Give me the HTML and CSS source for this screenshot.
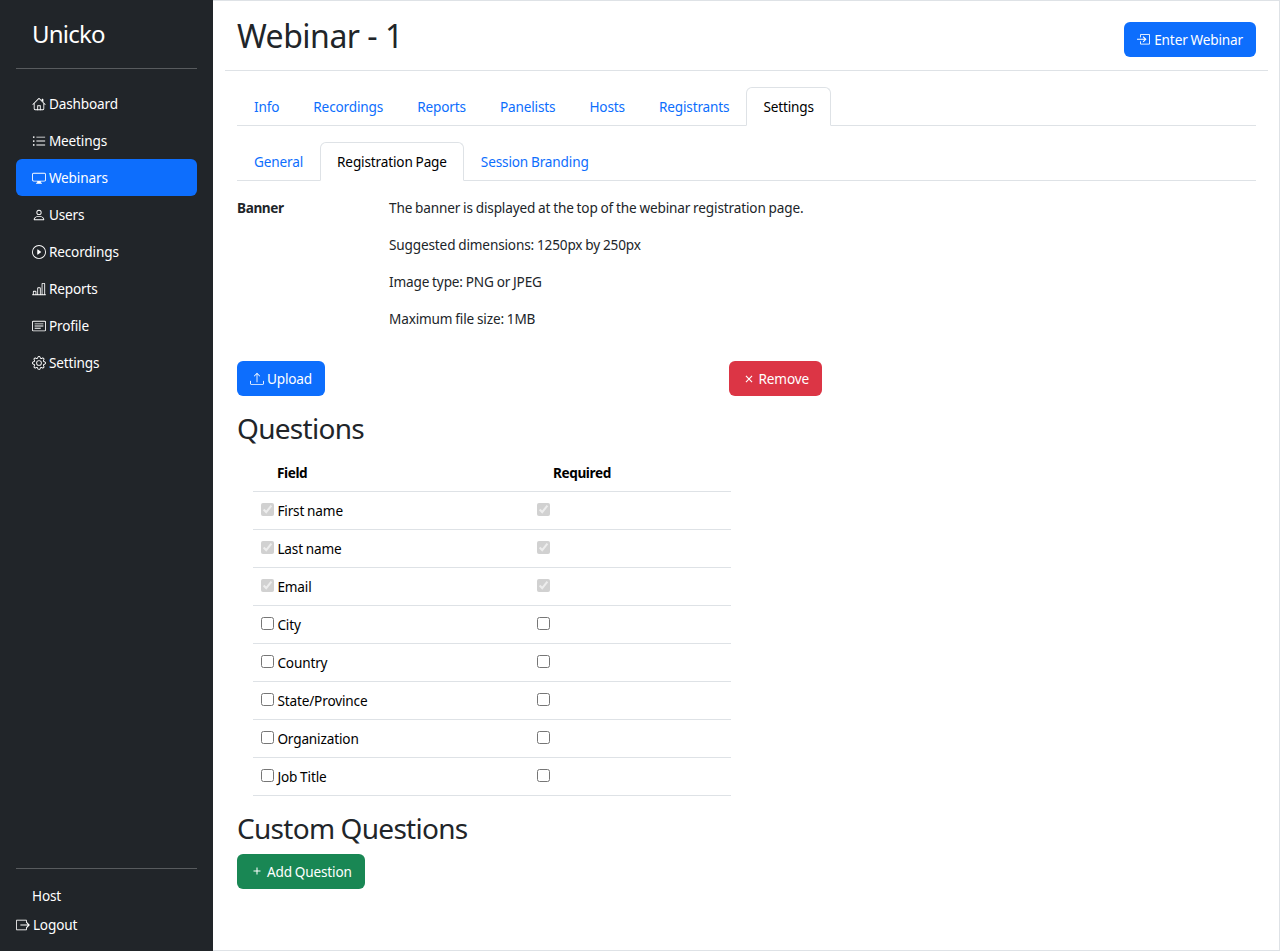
FILE: index.html
```
<!DOCTYPE html>
<html lang="en">
<head>
    <meta charset="UTF-8">
    <meta name="viewport" content="width=device-width, initial-scale=1.0">
    <title>Unicko - Webinar - 1</title>
    <link rel="stylesheet" href="styles.css">
</head>
<body>
    <aside class="sidebar">
        <a class="brand" href="#">Unicko</a>
        <hr>
        <ul class="menu">
            <li><a href="#"><svg class="icon" viewBox="0 0 16 16"><path fill-rule="evenodd" d="M2 13.5V7h1v6.5a.5.5 0 0 0 .5.5h9a.5.5 0 0 0 .5-.5V7h1v6.5a1.5 1.5 0 0 1-1.5 1.5h-9A1.5 1.5 0 0 1 2 13.5zm11-11V6l-2-2V2.500a.5.5 0 0 1 .5-.5h1a.5.5 0 0 1 .5.5z"/><path d="M7.293 1.500a1 1 0 0 1 1.414 0l6.647 6.646a.5.5 0 0 1-.708.708L8 2.207 1.354 8.854a.5.5 0 1 1-.708-.708L7.293 1.500z"/><path d="M6 15V9.500h4V15H9v-4.500H7V15z"/></svg> Dashboard</a></li>
            <li><a href="#"><svg class="icon" viewBox="0 0 16 16"><path d="M5 3h10v1H5zM5 7.500h10v1H5zM5 12h10v1H5z"/><circle cx="2" cy="3.500" r="1"/><circle cx="2" cy="8" r="1"/><circle cx="2" cy="12.500" r="1"/></svg> Meetings</a></li>
            <li><a class="active" href="#"><svg class="icon" viewBox="0 0 16 16"><path d="M0 4s0-2 2-2h12s2 0 2 2v6s0 2-2 2h-4c0 .667.083 1.167.25 1.500H11a.5.5 0 0 1 0 1H5a.5.5 0 0 1 0-1h.75c.167-.333.25-.833.25-1.500H2s-2 0-2-2V4zm1.398-.855a.758.758 0 0 0-.254.302A1.460 1.460 0 0 0 1 4.010V10c0 .325.078.502.145.602.070.105.170.188.302.254a1.464 1.464 0 0 0 .538.143L2.010 11H14c.325 0 .502-.078.602-.145a.758.758 0 0 0 .254-.302 1.464 1.464 0 0 0 .143-.538L15 9.990V4c0-.325-.078-.502-.145-.602a.757.757 0 0 0-.302-.254A1.460 1.460 0 0 0 13.990 3H2c-.325 0-.502.078-.602.145z"/></svg> Webinars</a></li>
            <li><a href="#"><svg class="icon" viewBox="0 0 16 16"><path d="M8 8a3 3 0 1 0 0-6 3 3 0 0 0 0 6zm2-3a2 2 0 1 1-4 0 2 2 0 0 1 4 0zm4 8c0 1-1 1-1 1H3s-1 0-1-1 1-4 6-4 6 3 6 4zm-1-.004c-.001-.246-.154-.986-.832-1.664C11.516 10.680 10.289 10 8 10c-2.290 0-3.516.680-4.168 1.332-.678.678-.830 1.418-.832 1.664h10z"/></svg> Users</a></li>
            <li><a href="#"><svg class="icon" viewBox="0 0 16 16"><path d="M8 15A7 7 0 1 1 8 1a7 7 0 0 1 0 14zm0 1A8 8 0 1 0 8 0a8 8 0 0 0 0 16z"/><path d="M6.271 5.055a.5.5 0 0 1 .52.038l3.500 2.500a.5.5 0 0 1 0 .814l-3.500 2.500A.5.5 0 0 1 6 10.500v-5a.5.5 0 0 1 .271-.445z"/></svg> Recordings</a></li>
            <li><a href="#"><svg class="icon" viewBox="0 0 16 16"><path d="M11 2a1 1 0 0 1 1-1h2a1 1 0 0 1 1 1v12h.5a.5.5 0 0 1 0 1H.5a.5.5 0 0 1 0-1H1v-3a1 1 0 0 1 1-1h2a1 1 0 0 1 1 1v3h1V7a1 1 0 0 1 1-1h2a1 1 0 0 1 1 1v7h1V2zm1 12h2V2h-2v12zm-3 0V7H7v7h2zm-5 0v-3H2v3h2z"/></svg> Reports</a></li>
            <li><a href="#"><svg class="icon" viewBox="0 0 16 16"><path d="M14.500 3a.5.5 0 0 1 .5.5v9a.5.5 0 0 1-.5.5h-13a.5.5 0 0 1-.5-.5v-9a.5.5 0 0 1 .5-.5h13zm-13-1A1.500 1.500 0 0 0 0 3.500v9A1.500 1.500 0 0 0 1.500 14h13a1.500 1.500 0 0 0 1.500-1.500v-9A1.500 1.500 0 0 0 14.500 2h-13z"/><path d="M3 5h10v1H3zM3 7.500h10v1H3zM3 10h7v1H3z"/></svg> Profile</a></li>
            <li><a href="#"><svg class="icon" viewBox="0 0 16 16"><path d="M8 4.754a3.246 3.246 0 1 0 0 6.492 3.246 3.246 0 0 0 0-6.492zM5.754 8a2.246 2.246 0 1 1 4.492 0 2.246 2.246 0 0 1-4.492 0z"/><path d="M9.796 1.343c-.527-1.790-3.065-1.790-3.592 0l-.094.319a.873.873 0 0 1-1.255.520l-.292-.160c-1.640-.892-3.433.902-2.540 2.541l.159.292a.873.873 0 0 1-.520 1.255l-.319.094c-1.790.527-1.790 3.065 0 3.592l.319.094a.873.873 0 0 1 .520 1.255l-.160.292c-.892 1.640.901 3.434 2.541 2.540l.292-.159a.873.873 0 0 1 1.255.520l.094.319c.527 1.790 3.065 1.790 3.592 0l.094-.319a.873.873 0 0 1 1.255-.520l.292.160c1.640.893 3.434-.902 2.540-2.541l-.159-.292a.873.873 0 0 1 .520-1.255l.319-.094c1.790-.527 1.790-3.065 0-3.592l-.319-.094a.873.873 0 0 1-.520-1.255l.160-.292c.893-1.640-.902-3.433-2.541-2.540l-.292.159a.873.873 0 0 1-1.255-.520l-.094-.319zm-2.633.283c.246-.835 1.428-.835 1.674 0l.094.319a1.873 1.873 0 0 0 2.693 1.115l.291-.160c.764-.415 1.600.420 1.184 1.185l-.159.292a1.873 1.873 0 0 0 1.116 2.692l.318.094c.835.246.835 1.428 0 1.674l-.319.094a1.873 1.873 0 0 0-1.115 2.693l.160.291c.415.764-.420 1.600-1.185 1.184l-.291-.159a1.873 1.873 0 0 0-2.693 1.116l-.094.318c-.246.835-1.428.835-1.674 0l-.094-.319a1.873 1.873 0 0 0-2.692-1.115l-.292.160c-.764.415-1.600-.420-1.184-1.185l.159-.291A1.873 1.873 0 0 0 1.945 8.930l-.319-.094c-.835-.246-.835-1.428 0-1.674l.319-.094A1.873 1.873 0 0 0 3.060 4.377l-.160-.292c-.415-.764.420-1.600 1.185-1.184l.292.159a1.873 1.873 0 0 0 2.692-1.115l.094-.319z"/></svg> Settings</a></li>
        </ul>
        <hr>
        <div class="account">
            <a class="host" href="#">Host</a>
            <a href="#"><svg class="icon" viewBox="0 0 16 16"><path d="M12 5V2.500H.500v11H12V11" fill="none" stroke="currentColor"/><path d="M5 8h10M11.800 4.800 15 8l-3.200 3.200" fill="none" stroke="currentColor" stroke-width="1.300"/></svg> Logout</a>
        </div>
    </aside>

    <main>
        <header>
            <h1>Webinar - 1</h1>
            <button class="btn btn-primary"><svg class="icon" viewBox="0 0 16 16"><path d="M4 5V1.700h10.300v11H4V9.500" fill="none" stroke="currentColor"/><path d="M0 7.200h10M7 4.200l3 3-3 3" fill="none" stroke="currentColor" stroke-width="1.300"/></svg> Enter Webinar</button>
        </header>

        <ul class="tabs">
            <li><a href="#">Info</a></li>
            <li><a href="#">Recordings</a></li>
            <li><a href="#">Reports</a></li>
            <li><a href="#">Panelists</a></li>
            <li><a href="#">Hosts</a></li>
            <li><a href="#">Registrants</a></li>
            <li><a class="active" href="#">Settings</a></li>
        </ul>
        <ul class="tabs">
            <li><a href="#">General</a></li>
            <li><a class="active" href="#">Registration Page</a></li>
            <li><a href="#">Session Branding</a></li>
        </ul>

        <section class="banner">
            <strong>Banner</strong>
            <div>
                <p>The banner is displayed at the top of the webinar registration page.</p>
                <p>Suggested dimensions: 1250px by 250px</p>
                <p>Image type: PNG or JPEG</p>
                <p>Maximum file size: 1MB</p>
            </div>
        </section>
        <div class="banner-actions">
            <button class="btn btn-primary"><svg class="icon" viewBox="0 0 16 16"><path d="M.5 9.900a.5.5 0 0 1 .5.5v2.500a1 1 0 0 0 1 1h12a1 1 0 0 0 1-1v-2.500a.5.5 0 0 1 1 0v2.500a2 2 0 0 1-2 2H2a2 2 0 0 1-2-2v-2.500a.5.5 0 0 1 .5-.5z"/><path d="M7.646 1.146a.5.5 0 0 1 .708 0l3 3a.5.5 0 0 1-.708.708L8.500 2.707V11.500a.5.5 0 0 1-1 0V2.707L5.354 4.854a.5.5 0 1 1-.708-.708l3-3z"/></svg> Upload</button>
            <button class="btn btn-danger"><svg class="icon" viewBox="0 0 16 16"><path d="m4.500 4.500 7 7m0-7-7 7" fill="none" stroke="currentColor" stroke-width="1.300"/></svg> Remove</button>
        </div>

        <h2>Questions</h2>
        <table>
            <thead>
                <tr><th class="field">Field</th><th>Required</th></tr>
            </thead>
            <tbody>
                <tr>
                    <td><input type="checkbox" checked disabled> First name</td>
                    <td><input type="checkbox" checked disabled></td>
                </tr>
                <tr>
                    <td><input type="checkbox" checked disabled> Last name</td>
                    <td><input type="checkbox" checked disabled></td>
                </tr>
                <tr>
                    <td><input type="checkbox" checked disabled> Email</td>
                    <td><input type="checkbox" checked disabled></td>
                </tr>
                <tr>
                    <td><input type="checkbox"> City</td>
                    <td><input type="checkbox"></td>
                </tr>
                <tr>
                    <td><input type="checkbox"> Country</td>
                    <td><input type="checkbox"></td>
                </tr>
                <tr>
                    <td><input type="checkbox"> State/Province</td>
                    <td><input type="checkbox"></td>
                </tr>
                <tr>
                    <td><input type="checkbox"> Organization</td>
                    <td><input type="checkbox"></td>
                </tr>
                <tr>
                    <td><input type="checkbox"> Job Title</td>
                    <td><input type="checkbox"></td>
                </tr>
            </tbody>
        </table>

        <h2>Custom Questions</h2>
        <button class="btn btn-success"><svg class="icon" viewBox="0 0 16 16"><path d="M8 4v8M4 8h8" fill="none" stroke="currentColor" stroke-width="1.200"/></svg> Add Question</button>
    </main>
</body>
</html>
```
FILE: styles.css
```
* {
    box-sizing: border-box;
}
body {
    display: flex;
    margin: 0;
    height: 951px;
    font-family: "Noto Sans", sans-serif;
    font-size: 13.6px;
    line-height: 21px;
    letter-spacing: -.15px;
    word-spacing: -.5px;
    color: #212529;
    background-color: #fff;
}
a {
    color: #0d6efd;
    text-decoration: none;
}
ul {
    list-style: none;
    margin: 0;
    padding: 0;
}
.icon {
    width: 14px;
    height: 14px;
    fill: currentColor;
    vertical-align: -1.75px;
}

/* sidebar */
.sidebar {
    display: flex;
    flex-direction: column;
    flex: none;
    width: 213px;
    padding: 16px;
    background-color: #212529;
    color: #fff;
}
.sidebar a {
    color: #fff;
}
.sidebar hr {
    width: 100%;
    margin: 16px 0;
    border: 0;
    border-top: 1px solid #fff;
    opacity: .25;
}
.sidebar .brand {
    padding-left: 16px;
    font-size: 24px;
    line-height: 36px;
    letter-spacing: -.8px;
}
.menu {
    flex: 1;
}
.menu a {
    display: block;
    padding: 8px 16px;
    border-radius: 6px;
}
.menu .active {
    background-color: #0d6efd;
}
.account {
    display: flex;
    flex-direction: column;
    gap: 8px;
}
.host {
    padding-left: 16px;
}

/* content */
main {
    flex: 1;
    padding: 0 23px 0 24px;
    border: 1px solid #dee2e6;
    border-left: 0;
}
header {
    display: flex;
    justify-content: space-between;
    align-items: center;
    height: 70px;
    margin: 0 -12px 16px;
    padding: 8px 12px 0;
    border-bottom: 1px solid #dee2e6;
}
h1, h2 {
    font-weight: 400;
    line-height: 1.2;
}
h1 {
    margin: 0 0 7px;
    font-size: 32px;
    letter-spacing: -.5px;
    word-spacing: 0;
}
h2 {
    margin: 16px 0 8px;
    font-size: 28px;
    letter-spacing: -.7px;
}
.tabs {
    display: flex;
    margin-bottom: 16px;
    border-bottom: 1px solid #dee2e6;
}
.tabs a {
    display: block;
    margin-bottom: -1px;
    padding: 8px 16px;
    border: 1px solid transparent;
    border-radius: 6px 6px 0 0;
}
.tabs .active {
    color: #000;
    background-color: #fff;
    border-color: #dee2e6 #dee2e6 #fff;
}
.banner {
    display: grid;
    grid-template-columns: 152px 1fr;
    margin-bottom: 32px;
}
.banner p {
    margin: 0 0 16px;
}
.banner p:last-child {
    margin: 0;
}
.banner-actions {
    display: flex;
    justify-content: space-between;
    width: 585px;
}
.btn {
    padding: 6px 12px;
    border: 1px solid transparent;
    border-radius: 6px;
    font: inherit;
    letter-spacing: inherit;
    word-spacing: inherit;
    color: #fff;
}
.btn-primary {
    background-color: #0d6efd;
}
.btn-danger {
    background-color: #dc3545;
}
.btn-success {
    background-color: #198754;
}
table {
    width: 478px;
    margin: 0 0 16px 16px;
    border-collapse: collapse;
    table-layout: fixed;
    color: #000;
}
th, td {
    height: 38px;
    padding: 8px;
    border-bottom: 1px solid #dee2e6;
    text-align: left;
}
strong, th {
    letter-spacing: -.4px;
}
th {
    padding-left: 24px;
}
.field {
    width: 276px;
}
input {
    width: 13px;
    height: 13px;
    margin: 0 .5px 0 0;
}
```
